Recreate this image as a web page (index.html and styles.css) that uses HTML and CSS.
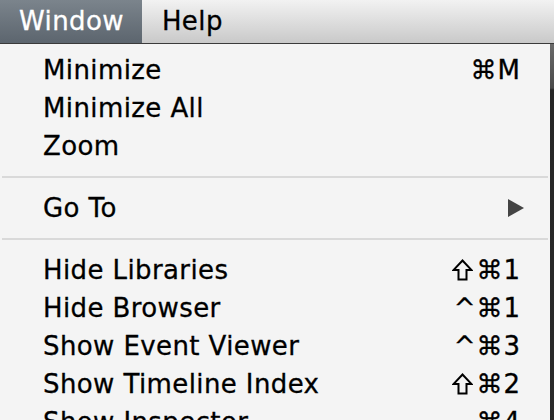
FILE: index.html
```html
<!DOCTYPE html>
<html lang="en">
<head>
    <meta charset="UTF-8">
    <title>Window Menu</title>
    <link rel="stylesheet" href="styles.css">
</head>
<body>
    <div class="menubar">
        <span class="menubar-item active">Window</span>
        <span class="menubar-item">Help</span>
    </div>
    <div class="screen">
        <div class="menu">
            <div class="menu-row"><span>Minimize</span><span class="key">⌘M</span></div>
            <div class="menu-row"><span>Minimize All</span></div>
            <div class="menu-row"><span>Zoom</span></div>
            <div class="separator"></div>
            <div class="menu-row">
                <span>Go To</span>
                <svg class="arrow" width="16" height="18" viewBox="0 0 16 18"><path d="M0 0 L16 9 L0 18 Z" fill="#444"/></svg>
            </div>
            <div class="separator"></div>
            <div class="menu-row">
                <span>Hide Libraries</span>
                <span class="key"><svg class="shift" width="21" height="22" viewBox="0 0 21 22"><path d="M10.5 1.5 L19.5 11 L14.5 11 L14.5 20.5 L6.5 20.5 L6.5 11 L1.5 11 Z" fill="none" stroke="#000" stroke-width="2"/></svg>⌘1</span>
            </div>
            <div class="menu-row"><span>Hide Browser</span><span class="key">^⌘1</span></div>
            <div class="menu-row"><span>Show Event Viewer</span><span class="key">^⌘3</span></div>
            <div class="menu-row">
                <span>Show Timeline Index</span>
                <span class="key"><svg class="shift" width="21" height="22" viewBox="0 0 21 22"><path d="M10.5 1.5 L19.5 11 L14.5 11 L14.5 20.5 L6.5 20.5 L6.5 11 L1.5 11 Z" fill="none" stroke="#000" stroke-width="2"/></svg>⌘2</span>
            </div>
            <div class="menu-row"><span>Show Inspector</span><span class="key">⌘4</span></div>
        </div>
        <div class="backdrop"></div>
    </div>
</body>
</html>
```
FILE: styles.css
```css
body {
    margin: 0;
    background-color: #2a2a2a;
    font-family: 'DejaVu Sans', sans-serif;
    color: #000;
    height: 420px;
    overflow: hidden;
}
.menubar {
    display: flex;
    height: 43px;
    background: linear-gradient(#f2f2f2, #c9c9c9);
    border-bottom: 1px solid #3a3a3a;
}
.menubar-item {
    padding: 0 20px;
    font-size: 26px;
    letter-spacing: 0.4px;
    line-height: 43px;
    -webkit-text-stroke: 0.3px #000;
}
.menubar-item.active {
    background: linear-gradient(#7b848c, #5c656e);
    color: #fff;
    -webkit-text-stroke: 0.3px #fff;
    padding: 0 18px 0 19px;
}
.screen {
    display: flex;
}
.menu {
    width: 550px;
    background-color: #f4f4f4;
    padding-top: 7px;
}
.backdrop {
    flex: 1;
    background: linear-gradient(#6a6a6a 0, #4a4a4a 44px, #262626 46px, #2a2a2a);
}
.menu-row {
    display: flex;
    justify-content: space-between;
    align-items: center;
    height: 38px;
    padding: 0 29px 0 43px;
    font-size: 26px;
    letter-spacing: 0.4px;
    -webkit-text-stroke: 0.3px #000;
}
.key {
    display: flex;
    align-items: center;
    letter-spacing: 1px;
}
.shift {
    flex-shrink: 0;
    margin-right: 3px;
}
.arrow {
    margin-right: -3px;
}
.separator {
    height: 2px;
    background-color: #d9d9d9;
    margin: 11px 2px 11px 2px;
}
```
